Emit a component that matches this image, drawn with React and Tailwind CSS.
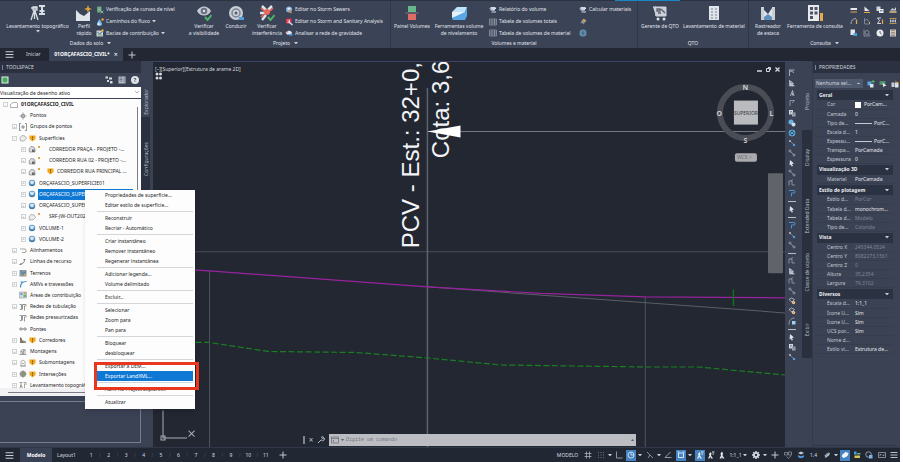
import React from "react";
import clsx from "clsx";

// small 16x16 drawings, used everywhere at 8 - 16px
const glyphs = {
  tripod: (
    <g stroke="#d9dde4" fill="none" strokeWidth="1.3">
      <path d="M1 3h6M3 2h4v3H3zM4 6L1 15M5 6l3 9M4.500 5v9" />
      <path d="M9 1h6M12 1v8M9.500 6h5M9 9h6" strokeWidth="2" />
    </g>
  ),
  profile: (
    <g>
      <path d="M0 5l4 4 4 2 6-5v10H0z" fill="#dfe3ea" />
      <path d="M12 0l1 3 3 1-3 1-1 3-1-3-3-1 3-1z" fill="#e8a33a" />
    </g>
  ),
  contour: (
    <g>
      <path d="M2 1h9v12H2z" fill="#5f9c7c" />
      <path d="M4 4h6M4 7h6M4 10h4" stroke="#b6d8c4" strokeWidth="1" />
      <path d="M9 9l6 6M15 9l-6 6" stroke="#9ac8ae" strokeWidth="1.500" />
    </g>
  ),
  drop: (
    <g>
      <path d="M7 2c3 5 5 7 5 10a5 4 0 0 1-10 0c0-3 2-5 5-10z" fill="#7db9ea" />
      <path d="M5 8l4 6H2z" fill="#dceafa" />
      <circle cx="13" cy="3" r="2.500" fill="#e8a33a" />
    </g>
  ),
  basin: (
    <g>
      <path d="M1 3h13v12H1z" fill="#c7d3d5" />
      <path d="M3 6l4 4 6-5" stroke="#3f6f8e" strokeWidth="2" fill="none" />
      <path d="M4 12h8" stroke="#6fae6b" strokeWidth="2" />
      <circle cx="13" cy="3" r="2.500" fill="#e8a33a" />
    </g>
  ),
  eye: (
    <g>
      <path d="M1 6c3-6 11-6 14 0-3 6-11 6-14 0z" fill="#c6cbd4" />
      <circle cx="8" cy="6" r="3.300" fill="#6a7282" />
      <circle cx="8" cy="6" r="1.200" fill="#dfe3ea" />
      <path d="M9 12l2.500 3 4-5" stroke="#4fb36a" strokeWidth="2" fill="none" />
    </g>
  ),
  drive: (
    <g>
      <circle cx="8" cy="8" r="7" fill="#c9cdd5" />
      <circle cx="8" cy="8" r="4" fill="none" stroke="#7c8493" strokeWidth="1.500" />
      <circle cx="8" cy="8" r="1.500" fill="#59616f" />
      <path d="M11 12h5v3h-5z" fill="#4f9be0" />
    </g>
  ),
  clash: (
    <g>
      <path d="M3 1l4 4M13 1L9 5M1 8h5M3 15l4-5" stroke="#dfe3ea" strokeWidth="2.500" />
      <circle cx="8" cy="7" r="3" fill="#e8695c" />
      <path d="M2 3l3 3M14 3l-3 3M2 12l3-3" stroke="#e8695c" strokeWidth="1.500" />
      <path d="M9 12l2.500 3 4-5" stroke="#4fb36a" strokeWidth="2" fill="none" />
    </g>
  ),
  storm: (
    <g>
      <circle cx="8" cy="7" r="6" fill="#86b4dd" />
      <path d="M4 5l4-2 4 2-4 3z" fill="#e4ebf3" />
      <path d="M8 9l5 5" stroke="#d98b45" strokeWidth="3" />
    </g>
  ),
  sanitary: (
    <g>
      <path d="M2 1h11v10H2z" fill="#d8334c" />
      <path d="M5 4l4 4M9 3v6H5" stroke="#fff" strokeWidth="1.500" fill="none" />
      <path d="M9 9l6 5" stroke="#d7e0ec" strokeWidth="3" />
    </g>
  ),
  gravity: (
    <g>
      <path d="M1 7l7-4 6 3-2 6-8-1z" fill="#dfe5ee" />
      <path d="M6 10h9v3H8z" fill="#5aa0e0" />
      <circle cx="4" cy="6" r="1.500" fill="#e8695c" />
    </g>
  ),
  volume: (
    <g>
      <path d="M4 1h8v6H4z" fill="#69b58c" />
      <path d="M4 9h8v6H4z" fill="#dd6d66" />
      <path d="M1 8h14" stroke="#8a6a70" strokeWidth="1" />
    </g>
  ),
  grading: (
    <g>
      <path d="M1 7l5-5h10l-2 5z" fill="#bfe3fa" />
      <path d="M1 7l13 0v3L1 13z" fill="#e6f1fa" />
      <path d="M1 13l13-6 2-5v9l-2 4H2z" fill="#5aa7e6" />
    </g>
  ),
  report: (
    <g>
      <path d="M3 2h9v7H3zM5 11h9v2H5z" fill="#d3d7de" />
      <path d="M1 4l4 4 5 1" stroke="#8fb3d8" strokeWidth="2" fill="none" />
      <path d="M11 3h3v3h-3z" fill="#e9ecf1" />
    </g>
  ),
  table: (
    <g fill="none" stroke="#a3aab6" strokeWidth="1.200">
      <path d="M1 2h14v12H1zM1 6h14M1 10h14M6 2v12M11 2v12" />
    </g>
  ),
  spark: (
    <g>
      <path d="M9 1l2 4 4 1-4 3-1 4-3-3-4 1 2-5z" fill="#8d95a4" />
      <circle cx="11" cy="5" r="2.500" fill="#e8a33a" />
    </g>
  ),
  globe: (
    <g>
      <circle cx="8" cy="8" r="7" fill="#6f9cba" />
      <path d="M2 8h12M8 2v12M4 4c3 3 5 3 8 0M4 12c3-3 5-3 8 0" stroke="#28506f" fill="none" />
    </g>
  ),
  cart: (
    <g>
      <path d="M1 2h3v9M3 2h11v9H4z" fill="#ccd1d9" stroke="#ccd1d9" />
      <path d="M5 4h3v2H5zM9 4l4 4M6 8h3" stroke="#59616f" strokeWidth="1.300" fill="none" />
      <circle cx="6" cy="14" r="1.500" fill="#dfe3ea" />
      <circle cx="12" cy="14" r="1.500" fill="#dfe3ea" />
    </g>
  ),
  sheet: (
    <g>
      <path d="M3 1h10v14H3z" fill="#dfe3ea" />
      <path d="M5 4h2M9 4h2M5 7h2M9 7h2M5 10h2M9 10h2M5 13h2M9 13h2" stroke="#7c8493" strokeWidth="1.200" />
    </g>
  ),
  stake: (
    <g>
      <path d="M1 2h3v13H1zM12 2h3v13h-3z" fill="#c9ced7" />
      <path d="M4 5l4 4 4-6v12H4z" fill="#dfe3ea" />
      <path d="M4 12l4-3 4 3v3H4z" fill="#5d90bd" />
    </g>
  ),
  inquiry: (
    <g>
      <path d="M1 0h11v16H1z" fill="#e7e9ed" />
      <path d="M3 2h3v3H3zM7.500 2h3v3h-3zM3 6.500h3v3H3zM7.500 6.500h3v3h-3zM3 11h3v3H3z" fill="#4a5263" />
      <path d="M13 8h3v8h-3z" fill="#e3a94c" />
    </g>
  ),
  ruler: (
    <g>
      <path d="M1 4h13v4H1z" fill="#e5e7eb" />
      <path d="M1 12h13" stroke="#e3a94c" strokeWidth="2" />
    </g>
  ),
  slope: (
    <g>
      <path d="M3 1l10 9H3z" fill="#e5e7eb" />
      <path d="M2 13h12" stroke="#e3a94c" strokeWidth="2" />
    </g>
  ),
  copy: (
    <g>
      <path d="M1 1h8v9H1z" fill="#cfd4dc" />
      <path d="M6 6h9v8H6z" fill="#eef0f3" />
      <path d="M8 8h5v3H8z" fill="#7d93b4" />
    </g>
  ),
  arc: (
    <g fill="none">
      <path d="M2 14C2 7 6 3 12 3" stroke="#c5cad3" strokeWidth="1.500" />
      <path d="M13 5v9" stroke="#e3a94c" strokeWidth="2.500" />
    </g>
  ),
  points: (
    <g fill="none" stroke="#9fa6b4">
      <path d="M3 2v12h10M3 8l5-4 5 7" strokeWidth="1.300" />
      <path d="M13 10v4" stroke="#e3a94c" strokeWidth="2" />
    </g>
  ),
  sigma: (
    <g fill="none">
      <path d="M10 2H3l4 5-4 6h7" stroke="#e5e7eb" strokeWidth="1.800" />
      <path d="M13 5v9" stroke="#e3a94c" strokeWidth="2.500" />
    </g>
  ),
  paste: (
    <g>
      <path d="M1 1h9v11H1z" fill="#e5e7eb" />
      <path d="M7 8h7v6H7z" fill="#4f9be0" />
    </g>
  ),
  magnify: (
    <g fill="none" stroke="#a8aeba" strokeWidth="1.300">
      <path d="M2 1v13h12" />
      <circle cx="8" cy="7" r="4" />
      <path d="M11 10l3 3" />
    </g>
  ),
  clock: (
    <g>
      <circle cx="8" cy="8" r="7" fill="#e9ebef" />
      <path d="M8 4v4l3 2" stroke="#3a4254" strokeWidth="1.500" fill="none" />
    </g>
  ),
  calc: (
    <g>
      <path d="M2 1h12v14H2z" fill="#d5c9bb" />
      <path d="M4 3h8M4 7h8M4 10h8M4 13h8" stroke="#555d6c" />
    </g>
  ),
  elevation: (
    <g>
      <path d="M2 9l5-5 3 3 4-5v7z" fill="#c9ced7" />
      <path d="M1 12h14" stroke="#e3c27c" strokeWidth="3" />
    </g>
  ),
  range: (
    <g>
      <path d="M1 3h14M1 13h14" stroke="#e3a94c" strokeWidth="1.500" />
      <path d="M3 5v6M8 5v6M13 5v6M3 8h10" stroke="#e5e7eb" strokeWidth="1.500" />
    </g>
  ),
  refresh: (
    <g>
      <path d="M1 1h14v14H1z" fill="#e8f0ea" />
      <path d="M3 3h10v10H3z" fill="#3fae5d" />
    </g>
  ),
  tree: (
    <g fill="#d5d9e0">
      <path d="M1 1h5v4H1zM8 3h6v4H8zM4 8h4v4H4zM10 10h5v5h-5z" />
    </g>
  ),
  list: (
    <g>
      <path d="M1 1h14v14H1z" fill="#b9bec8" />
      <path d="M3 4h6M3 7h6M3 10h6" stroke="#4a5263" strokeWidth="1.300" />
      <path d="M11 3h3v10h-3z" fill="#8d95a4" />
    </g>
  ),
  // tree
  drawing: <path d="M1 7l5-4h7l2 2v8H1z" fill="#fff" stroke="#777" strokeWidth="1.200" />,
  cross: (
    <path d="M8 1v14M1 8h14M5 5h6v6H5z" stroke="#777" strokeWidth="1.300" fill="none" />
  ),
  bracket: (
    <path d="M4 1H1v14h3M12 1h3v14h-3M8 4v8M4 8h8" stroke="#666" strokeWidth="1.400" fill="none" />
  ),
  surface: (
    <path d="M2 8l4-5 6 1 3 5-5 5H3z" fill="#eee" stroke="#888" strokeWidth="1.200" />
  ),
  corridorSurface: (
    <g>
      <path d="M2 8l4-5 6 1 2 4v6H3z" fill="#ddd" stroke="#777" strokeWidth="1.300" />
      <path d="M8 9h5v5H8z" fill="#666" />
    </g>
  ),
  ball: (
    <g>
      <circle cx="8" cy="8" r="6.500" fill="#5d93c0" />
      <path d="M3 5l5-2 5 2-3 5H6z" fill="#cfe4f4" />
      <path d="M3 11c3 3 7 3 10 0" stroke="#2d587e" fill="none" />
    </g>
  ),
  warn: (
    <g>
      <path d="M1 1h14v8l-7 6-7-6z" fill="#f2a81d" />
      <path d="M8 3v5M8 9.500v2" stroke="#5a3d00" strokeWidth="1.600" />
    </g>
  ),
  align: <path d="M2 4h10c3 0 3 7 0 7H6" stroke="#777" strokeWidth="1.300" fill="none" />,
  feature: (
    <path d="M2 12c6 0 9-3 9-9M9 3h4M1 13h4" stroke="#666" strokeWidth="1.600" fill="none" />
  ),
  parcel: (
    <g>
      <path d="M1 2h14v13H1z" fill="#8a9aa6" />
      <path d="M3 2l5 6 6-4v5l-6 5z" fill="#4d82ad" />
      <path d="M9 9h5v5H9z" fill="#c9a35e" />
    </g>
  ),
  rail: <path d="M3 15C3 7 7 3 15 3M3 4h4" stroke="#3f8ccd" strokeWidth="2.200" fill="none" />,
  area: (
    <g>
      <path d="M1 2h14v12H1z" fill="#cfd9de" stroke="#7b8a94" />
      <path d="M3 4h4v4H3z" fill="#5c9bd0" />
      <path d="M9 7h5v5H9z" fill="#6fae6b" />
      <circle cx="12" cy="4" r="2" fill="#e39a3a" />
    </g>
  ),
  pipe: (
    <path d="M1 3h4v10H2M7 13V3h7v4M11 5v10M5 6h2" stroke="#777" strokeWidth="1.500" fill="none" />
  ),
  bridge: (
    <g fill="none" stroke="#777" strokeWidth="1.300">
      <circle cx="4" cy="8" r="2.500" />
      <circle cx="12" cy="8" r="2.500" />
      <path d="M1 8h14" />
    </g>
  ),
  corridor: (
    <g>
      <path d="M2 14V2l4 3v3l8 3v3z" fill="#7d776a" />
      <path d="M6 8l8 6" stroke="#d6cfbd" />
    </g>
  ),
  assembly: (
    <path d="M1 13h14M4 13V7h3v6M9 13V4h3v9M2 7l5-4 6 1" stroke="#777" strokeWidth="1.300" fill="none" />
  ),
  sub: <path d="M4 14V5l4-3 4 3v9zM6 9h4M2 14h12" stroke="#888" strokeWidth="1.300" fill="none" />,
  inter: <path d="M8 1v14M1 8h14M4 4h8v8H4z" stroke="#6b7560" strokeWidth="2.200" fill="none" />,
  survey: <path d="M1 3h6M4 3v10M2 14l2-6 3 6M9 3h5v5M11 5v9" stroke="#777" strokeWidth="1.300" fill="none" />,
  // canvas toolbar
  p1: <path d="M2 2h11M3 14V3l9 4" stroke="#b8bfcb" strokeWidth="1.700" fill="none" />,
  p2: <path d="M3 2v12h10M5 4l6 5H6z" stroke="#b8bfcb" strokeWidth="1.500" fill="#b8bfcb" />,
  p3: <path d="M5 14l4-11 3 11M9 8v5" stroke="#c6ccd6" strokeWidth="1.600" fill="none" />,
  p4: <path d="M4 14V3h9L8 8" stroke="#9da5b4" strokeWidth="1.600" fill="none" />,
  p5: (
    <g>
      <path d="M2 2h8v9H2z" fill="#d5d9e0" />
      <path d="M8 7h7v8H8z" fill="#9da5b4" />
      <path d="M4 5h4M4 8h3M10 10h3" stroke="#3b4254" />
    </g>
  ),
  p6: (
    <g>
      <circle cx="6" cy="6" r="5" fill="#69b5e8" />
      <circle cx="11" cy="11" r="4" fill="#d4dae3" />
    </g>
  ),
  p7: (
    <g fill="none" stroke="#57b1ea" strokeWidth="2">
      <circle cx="8" cy="8" r="6" />
      <path d="M3 4l10 8M13 4L3 12" />
    </g>
  ),
  p8: (
    <g>
      <circle cx="4" cy="4" r="2" fill="#b8bfcb" />
      <path d="M4 4l7 7" stroke="#b8bfcb" />
      <circle cx="12" cy="12" r="2.500" fill="#4f9be0" />
    </g>
  ),
  p9: (
    <g fill="none" stroke="#aeb5c2" strokeWidth="1.400">
      <circle cx="4" cy="4" r="2" />
      <path d="M6 6l4 4" />
      <circle cx="12" cy="12" r="2" />
    </g>
  ),
  p10: <path d="M4 2l8 7-4 1 2 4-3 1-1-4-3 2z" fill="#dfe3ea" />,
  p11: <path d="M2 13V4h6v8h6M5 4l5-3" stroke="#9da5b4" strokeWidth="1.500" fill="none" />,
  p12: <path d="M2 3h10c3 0 3 5 0 5H7v7" stroke="#4f9be0" strokeWidth="1.800" fill="none" />,
  p13: (
    <g>
      <path d="M2 5l5-3 6 3-5 5z" fill="none" stroke="#cbd0d9" strokeWidth="1.500" />
      <circle cx="11" cy="11" r="3.500" fill="#e3c79a" />
      <path d="M9 13l5-5" stroke="#d06a5a" strokeWidth="1.500" />
    </g>
  ),
  p14: (
    <g>
      <path d="M2 15C2 7 6 2 13 2" stroke="#aeb5c2" strokeWidth="1.500" fill="none" />
      <path d="M8 8h7v7H8z" fill="#9fd0f5" />
    </g>
  ),
  // status bar
  grid: <path d="M1 5h14M1 11h14M5 1v14M11 1v14" stroke="#a9b0bd" strokeWidth="1.600" />,
  dots: (
    <path d="M2 3h12M2 8h12M2 13h12" stroke="#7d8595" strokeWidth="1.600" strokeDasharray="2 3" />
  ),
  ortho: <path d="M3 1v13h12" stroke="#a9b0bd" strokeWidth="1.600" fill="none" />,
  polar: (
    <g fill="none" stroke="#e5f0fb" strokeWidth="1.500">
      <circle cx="8" cy="8" r="6" />
      <path d="M8 3v5h6" />
    </g>
  ),
  iso: <path d="M2 2l12 12M8 8l-4 6" stroke="#a9b0bd" strokeWidth="1.500" fill="none" />,
  angle: <path d="M13 2L2 13h13" stroke="#a9b0bd" strokeWidth="1.700" fill="none" />,
  osnap: <path d="M3 4h10v9H3zM1 2h4M11 2h4" stroke="#e5f0fb" strokeWidth="1.800" fill="none" />,
  person: <path d="M8 1l2 4-1 4 4 6H9L8 11l-1 4H3l3-6-1-4z" fill="#e5e9f0" />,
  personPlus: (
    <g fill="#e5e9f0">
      <path d="M7 2l2 3-1 4 4 6H8l-1-4-2 4H2l3-6-1-3z" />
      <path d="M10 1h5v2h-5zM11 5h3v2h-3z" />
    </g>
  ),
  gear: (
    <g>
      <path d="M8 0v16M0 8h16M2.500 2.500l11 11M13.500 2.500l-11 11" stroke="#d5dae2" strokeWidth="3" />
      <circle cx="8" cy="8" r="5.500" fill="#d5dae2" />
      <circle cx="8" cy="8" r="2.300" fill="#242a36" />
    </g>
  ),
  plus: <path d="M8 1v14M1 8h14" stroke="#c3c9d3" strokeWidth="2" />,
  annot: (
    <g fill="none" stroke="#8d95a4" strokeWidth="1.500">
      <path d="M1 3h6v5H1zM9 2h6v6H9zM5 11l4 4 5-6" />
    </g>
  ),
  layers: (
    <g>
      <path d="M2 4l6-3 6 3-6 3z" fill="#c3c9d3" />
      <path d="M2 8c3 3 9 3 12 0v4c-3 3-9 3-12 0z" fill="#4f9be0" />
    </g>
  ),
  leaf: (
    <g>
      <path d="M3 9l7-6 4 1-2 5-7 5z" fill="#b9c0cc" />
      <path d="M1 14L14 1" stroke="#242a36" />
    </g>
  ),
  pill: <path d="M2 8l7-6 6 2-2 6-7 4-4-2z" fill="#f1f6fc" />,
  colors: (
    <g>
      <path d="M2 1h5v6H2z" fill="#4f9be0" />
      <path d="M8 4h7v3H8z" fill="#5fb37c" />
      <path d="M3 9h11v5H3z" fill="#d7c65a" />
    </g>
  ),
  lock: (
    <g>
      <circle cx="7" cy="7" r="5.500" fill="none" stroke="#b9c0cc" strokeWidth="1.500" />
      <path d="M8 8h7v7H8z" fill="#7fb4e6" />
    </g>
  ),
  full: (
    <path d="M1 3h14v10H1zM4 10V7h3M12 6v3H9" stroke="#aab1be" strokeWidth="1.400" fill="none" />
  ),
  burger: <path d="M1 3h14M1 8h14M1 13h14" stroke="#c9ced8" strokeWidth="1.800" />,
  wrench: <path d="M2 14L9 7M8 3a4 4 0 0 1 5-1l-2 3 1 1 3-1a4 4 0 0 1-6 4" stroke="#b8bfcb" strokeWidth="2" fill="none" />,
  prompt: <path d="M1 2h14v12H1zM1 5h14M4 8l2 2-2 2" stroke="#6b6f77" strokeWidth="1.500" fill="none" />,
  pickAdd: (
    <g>
      <path d="M1 3h8v8H1z" fill="#5aa7e6" />
      <path d="M6 8h7v7H6z" fill="#dfe3ea" />
      <path d="M12 0v7M9 3h7" stroke="#4fb36a" strokeWidth="2" />
    </g>
  ),
  pick: (
    <g>
      <path d="M1 2h12v8H1z" fill="#4f8f6d" />
      <path d="M7 5l8 7-4 0-2 3z" fill="#eef0f3" />
    </g>
  ),
  quick: (
    <g>
      <path d="M1 5h6v9H1z" fill="#c9ced7" />
      <path d="M8 5h7v10H8z" fill="#dfe3ea" />
      <path d="M9 0l2 4h4l-5 4z" fill="#e8a33a" />
    </g>
  ),
};

const Icon = ({ name, className = "size-2" }) => (
  <svg viewBox="0 0 16 16" className={clsx("shrink-0", className)} aria-hidden="true">
    {glyphs[name]}
  </svg>
);

const Caret = ({ className = "fill-[#c9ced8]" }) => (
  <svg viewBox="0 0 8 5" className={clsx("w-1 shrink-0", className)} aria-hidden="true">
    <path d="M0 0h8L4 5z" />
  </svg>
);

//Ribbon
const BigButton = ({ icon, lines, caret, className }) => (
  <button className={clsx("flex flex-col items-center gap-0.5 whitespace-nowrap pt-1", className)}>
    <Icon name={icon} className="size-4" />
    <span className="flex flex-col items-center leading-[7px]">
      {lines.map((line) => (
        <span key={line}>{line}</span>
      ))}
      {caret && <Caret />}
    </span>
  </button>
);

const SmallButtons = ({ items, className }) => (
  <div className={clsx("flex flex-col pt-[3px]", className)}>
    {items.map(([icon, label, caret]) => (
      <button key={icon + label} aria-label={label || icon} className="flex flex-1 items-center gap-[2px] whitespace-nowrap">
        <Icon name={icon} />
        {label}
        {caret && <Caret />}
      </button>
    ))}
  </div>
);

const RibbonGroup = ({ title, caret, className, children }) => (
  <section className={clsx("flex shrink-0 flex-col", className)}>
    <div className="flex h-[38px]">{children}</div>
    <h2 className="flex h-[8px] items-center justify-center gap-1">
      {title}
      {caret && <Caret />}
    </h2>
  </section>
);

const inquiryTools = [
  "ruler", "slope", "copy", "elevation",
  "arc", "points", "sigma", "range",
  "paste", "magnify", "clock", "calc",
];

const Ribbon = () => (
  <header className="flex h-12 shrink-0 overflow-hidden border-t border-[#2b3242] bg-[#3b4357] text-[#e1e4ea]">
    <RibbonGroup title="Dados do solo" caret className="w-[181px]">
      <BigButton icon="tripod" lines={["Levantamento topográfico"]} caret className="w-[75px]" />
      <BigButton icon="profile" lines={["Perfil", "rápido"]} className="w-[18px]" />
      <SmallButtons
        className="pl-[3px]"
        items={[
          ["contour", "Verificação de curvas de nível"],
          ["drop", "Caminhos do fluxo", true],
          ["basin", "Bacias de contribuição", true],
        ]}
      />
    </RibbonGroup>
    <RibbonGroup title="Projeto" caret className="w-[210px] border-r border-[#30374a]">
      <BigButton icon="eye" lines={["Verificar", "a visibilidade"]} className="ml-[6px] w-[34px]" />
      <BigButton icon="drive" lines={["Conduzir"]} className="w-[30px]" />
      <BigButton icon="clash" lines={["Verificar", "interferência"]} className="w-[32px]" />
      <SmallButtons
        className="pl-[2px]"
        items={[
          ["storm", "Editar no Storm Sewers"],
          ["sanitary", "Editar no Storm and Sanitary Analysis"],
          ["gravity", "Analisar a rede de gravidade"],
        ]}
      />
    </RibbonGroup>
    <RibbonGroup title="Volumes e material" className="w-[247px] border-r border-[#30374a]">
      <BigButton icon="volume" lines={["Painel Volumes"]} className="ml-[2px] w-[38px]" />
      <BigButton icon="grading" lines={["Ferramentas volume", "de nivelamento"]} className="w-[56px]" />
      <SmallButtons
        className="w-[92px] pl-[2px]"
        items={[
          ["report", "Relatório do volume"],
          ["table", "Tabela de volumes totais"],
          ["table", "Tabela de volumes de material"],
        ]}
      />
      <SmallButtons items={[["report", "Calcular materiais"], ["spark", ""], ["globe", ""]]} />
    </RibbonGroup>
    <RibbonGroup title="QTO" className="w-[111px] border-r border-[#30374a]">
      <BigButton icon="cart" lines={["Gerente de QTO"]} className="ml-[2px] w-[40px]" />
      <BigButton icon="sheet" lines={["Levantamento de material"]} className="w-[68px]" />
    </RibbonGroup>
    <RibbonGroup title="Consulta" caret className="w-[151px]">
      <BigButton icon="stake" lines={["Rastreador", "de estaca"]} className="ml-[4px] w-[30px]" />
      <BigButton icon="inquiry" lines={["Ferramenta de consulta"]} className="w-[64px]" />
      <div className="grid w-[52px] grid-cols-4 place-items-center pt-[3px]">
        {inquiryTools.map((name) => (
          <button key={name} aria-label={name}>
            <Icon name={name} />
          </button>
        ))}
      </div>
    </RibbonGroup>
  </header>
);

const FileTabs = () => (
  <nav className="flex h-[13px] shrink-0 items-center bg-[#222733] text-[#d3d7de]">
    <button aria-label="Menu" className="ml-[5px]">
      <Icon name="burger" className="size-[9px]" />
    </button>
    <button className="ml-[12px] w-[23px] text-left">Iniciar</button>
    <button className="flex h-full w-[74px] items-center justify-center gap-1 bg-[#3b4357] font-bold text-white">
      01ORÇAFASCIO_CIVIL* <span className="text-[7px] font-normal">×</span>
    </button>
    <button aria-label="Nova guia" className="ml-[5px]">
      <Icon name="plus" />
    </button>
  </nav>
);

//Toolspace
const treeRows = [
  [0, "-", "drawing", "01ORÇAFASCIO_CIVIL"],
  [1, "", "cross", "Pontos"],
  [1, "+", "bracket", "Grupos de pontos"],
  [1, "-", "surface", "Superfícies", "warn"],
  [2, "+", "corridorSurface", "CORREDOR PRAÇA - PROJETO -...", "dot"],
  [2, "+", "corridorSurface", "CORREDOR RUA 02 - PROJETO -...", "dot"],
  [2, "+", "corridorSurface", "CORREDOR RUA PRINCIPAL ...", "dotwarn"],
  [2, "+", "ball", "ORÇAFASCIO_SUPERFICIE01"],
  [2, "+", "ball", "ORÇAFASCIO_SUPERFICIE02", "selected"],
  [2, "+", "ball", "ORÇAFASCIO_SUPERFICIE03"],
  [2, "+", "surface", "SRF-JW-OUT2023", "dot"],
  [2, "+", "ball", "VOLUME-1"],
  [2, "+", "ball", "VOLUME-2"],
  [1, "+", "align", "Alinhamentos"],
  [1, "+", "feature", "Linhas de recurso"],
  [1, "+", "parcel", "Terrenos"],
  [1, "+", "rail", "AMVs e travessões"],
  [1, "", "area", "Áreas de contribuição"],
  [1, "+", "pipe", "Redes de tubulação"],
  [1, "", "pipe", "Redes pressurizadas"],
  [1, "", "bridge", "Pontes"],
  [1, "+", "corridor", "Corredores", "warn"],
  [1, "+", "assembly", "Montagens"],
  [1, "+", "sub", "Submontagens", "warn"],
  [1, "+", "inter", "Interseções", "warn"],
  [1, "+", "survey", "Levantamento topográfico"],
];

const indent = ["pl-[3px]", "pl-[12px]", "pl-[21px]"];

const TreeRow = ({ row: [level, toggle, icon, label, mark] }) => (
  <li className={clsx("flex items-center whitespace-nowrap", indent[level])}>
    <span className="flex w-[7px] justify-start">
      {toggle && (
        <span className="flex size-[5px] items-center justify-center border border-[#cfd1d5] text-[4px] leading-none text-[#777]">
          {toggle}
        </span>
      )}
    </span>
    <Icon name={icon} className="size-[8px]" />
    {mark === "warn" && <Icon name="warn" className="ml-[2px] size-[7px]" />}
    {mark && mark.startsWith("dot") && <span className="mb-[5px] ml-[2px] size-[2px] bg-[#e8a33a]" />}
    {mark === "dotwarn" && <Icon name="warn" className="ml-[7px] size-[7px]" />}
    <button
      className={clsx(
        "ml-[2px] pl-px text-left leading-[11px]",
        level === 0 && "font-bold",
        mark === "dot" && "ml-[8px]",
        mark === "selected" ? "flex-1 bg-[#0f78d4] text-white" : "text-[#1f1f1f]"
      )}
    >
      {label}
    </button>
  </li>
);

const SideTab = ({ active, className, children }) => (
  <button
    className={clsx(
      "flex w-full items-center justify-center text-[#b4bbc7]",
      active ? "bg-[#3b4254]" : "bg-[#2a303e]",
      className
    )}
  >
    <span className="rotate-180 whitespace-nowrap leading-[8px] [writing-mode:vertical-rl]">{children}</span>
  </button>
);

const PanelTitle = ({ children }) => (
  <h2 className="flex h-3 items-center gap-[3px] bg-[#2b3140] pl-[2px] text-[#d3d7de]">
    <span className="h-[5px] w-px bg-[#7d8595]" />
    {children}
  </h2>
);

const Toolspace = () => (
  <aside className="flex w-[153px] shrink-0 bg-[#3b4254]">
    <div className="flex w-[141px] flex-col overflow-hidden">
      <PanelTitle>TOOLSPACE</PanelTitle>
      <div className="flex h-[14px] items-center pl-px pr-[2px]">
        <button aria-label="Atualizar">
          <Icon name="refresh" />
        </button>
        <div className="ml-auto flex gap-[5px]">
          <button aria-label="Árvore"><Icon name="tree" /></button>
          <button aria-label="Panorama"><Icon name="list" /></button>
          <button aria-label="Ajuda" className="size-2 rounded-full bg-[#dfe2e8] font-bold leading-[8px] text-[#3b4254]">?</button>
        </div>
      </div>
      <label className="flex h-[11px] items-center bg-white pr-[2px]">
        <select aria-label="Visualização" className="h-[10px] min-w-0 flex-1 appearance-none leading-[10px] text-[#1f1f1f]">
          <option>Visualização de desenho ativo</option>
        </select>
        <svg viewBox="0 0 8 5" className="w-1 fill-none stroke-[#666]"><path d="M0 0l4 4 4-4" /></svg>
      </label>
      <div className="mt-px flex h-[289px] shrink-0 overflow-hidden bg-[#fcfcfd]">
        <ul className="flex h-[292px] min-w-0 flex-1 flex-col justify-between overflow-hidden">
          {treeRows.map((row) => (
            <TreeRow key={row[3]} row={row} />
          ))}
        </ul>
        <div className="w-[8px] shrink-0 pt-[8px]">
          <div className="mx-auto h-[130px] w-px bg-[#7d7f83]" />
        </div>
      </div>
      <div className="flex h-2 shrink-0 items-center bg-[#f1f1f3] px-2">
        <div className="h-px w-[90px] bg-[#7d7f83]" />
      </div>
      <div className="mb-1 mt-[5px] flex-1 border border-l-0 border-[#767d8c]" />
    </div>
    <div className="w-[9px] pt-[26px]">
      <SideTab active className="h-[30px]">Explorador</SideTab>
      <SideTab className="h-[84px]">Configurações</SideTab>
    </div>
  </aside>
);

//Context menu
const menuGroups = [
  ["Propriedades de superfície...", "Editar estilo de superfície..."],
  ["Reconstruir", "Recriar - Automático"],
  ["Criar instantâneo", "Remover instantâneo", "Regenerar instantânea"],
  ["Adicionar legenda...", "Volume delimitado"],
  ["Excluir..."],
  ["Selecionar", "Zoom para", "Pan para"],
  ["Bloquear", "desbloquear"],
  ["Exportar a DEM...", "Exportar LandXML..."],
  ["Abrir no Project Explorer..."],
  ["Atualizar"],
];

const ContextMenu = () => (
  <div className="absolute left-[85px] top-[190px] w-[110px] bg-[#fdfdfd] pb-[2px] text-[#1f1f1f] shadow-md" role="menu">
    <div className="ml-3 mr-[2px]">
      {menuGroups.map((group, i) => (
        <div key={i} className={clsx("flex flex-col", i > 0 && "mt-px border-t border-[#d3d5d9] pt-px")}>
          {group.map((item) => (
            <button
              key={item}
              role="menuitem"
              className={clsx(
                "h-[10px] whitespace-nowrap pl-2 text-left leading-[10px]",
                item === "Exportar LandXML..." && "bg-[#0f78d4] text-white"
              )}
            >
              {item}
            </button>
          ))}
        </div>
      ))}
    </div>
  </div>
);

//Drawing area
const Profile = () => (
  <svg viewBox="153 62 631 385" preserveAspectRatio="xMinYMin slice" className="absolute inset-0 size-full" fill="none">
    <path d="M153 251.500H784" stroke="#4a4f59" />
    <path d="M427 131.500H784" stroke="#747882" />
    <path d="M427 88V447" stroke="#5f636d" strokeWidth="1.500" />
    <path d="M209.500 270V447M644.500 297V447" stroke="#50545e" />
    <path d="M427 286.500L784 312.500" stroke="#5a5e66" />
    <path d="M153 267L209 270.500L427 286.500L540 293L645 296.500L784 297.500" stroke="#9a229e" strokeWidth="1.200" />
    <path
      d="M153 342H209L268 351L355 352L427 357.500L500 364.500L645 366.500H697L784 374.500"
      stroke="#1a7f22"
      strokeWidth="1.200"
      strokeDasharray="6 2.500"
    />
    <path d="M732.500 289V305.500" stroke="#14701c" strokeWidth="1.500" />
    <g className="fill-[#f3f4f7] font-['Liberation_Sans',sans-serif] text-[24px]">
      <text transform="translate(419 248) rotate(-90)">PCV - Est.: 32+0,</text>
      <text transform="translate(449 158) rotate(-90)">Cota: 3,6</text>
    </g>
    <path d="M427 131.500L460 125.500V137.500z" fill="#fff" />

    {/* ucs */}
    <path d="M163 410V437.500H187M161 435.500h4v4h-4zM188.500 430l6 6M194.500 430l-6 6" stroke="#a9adb5" />
    <g fill="#d5d8de">
      <circle cx="157" cy="74" r="1.500" />
      <circle cx="160.500" cy="74" r="1.500" />
      <circle cx="157" cy="78" r="1.500" />
      <circle cx="160.500" cy="78" r="1.500" />
    </g>

    {/* view cube */}
    <circle cx="744.500" cy="112.500" r="25.500" stroke="#4a4d55" strokeWidth="6" />
    <path d="M733 100.500h24v24h-24z" fill="#b9bbbf" />
    <g className="fill-[#c9ccd2] font-bold" fontSize="7" textAnchor="middle">
      <text x="744.500" y="90">N</text>
      <text x="744.500" y="142.500">S</text>
      <text x="718.500" y="115.500">O</text>
      <text x="770.500" y="115.500">L</text>
    </g>
    <text x="745" y="114.500" fontSize="5" textAnchor="middle" className="fill-[#33363d]">SUPERIOR</text>
    <rect x="734" y="153" width="22" height="8.500" rx="2" fill="#a9abaf" />
    <text x="736" y="159" fontSize="5" className="fill-[#6d7077]">WCS ▿</text>
    <rect x="767" y="173" width="15" height="100" rx="1" fill="#606369" />
  </svg>
);

const Canvas = () => (
  <main className="relative flex min-w-0 flex-1 flex-col overflow-hidden border-t border-[#3c4663] bg-[#222731]">
    <Profile />
    <div className="relative flex items-center justify-between pl-[2px] pr-[5px] pt-[4px] text-[#d5d8de]">
      <span>[–][Superior][Estrutura de arame 2D]</span>
      <div className="flex gap-[4px]">
        <button aria-label="Minimizar">
          <svg viewBox="0 0 5 5" className="size-[5px]"><path d="M0 4h5" stroke="#d5d8de" strokeWidth="1.500" /></svg>
        </button>
        <button aria-label="Restaurar">
          <svg viewBox="0 0 5 5" className="size-[5px]" fill="none" stroke="#d5d8de"><path d="M.5 1.500h3v3h-3zM2 .5h2.500V3" /></svg>
        </button>
        <button aria-label="Fechar">
          <svg viewBox="0 0 5 5" className="size-[5px]"><path d="M.5.5l4 4M4.500.5l-4 4" stroke="#d5d8de" strokeWidth="1.300" /></svg>
        </button>
      </div>
    </div>
    <form className="relative mb-px ml-[150px] mr-[149px] mt-auto flex h-3 items-center">
      <span className="h-2 w-[2px] bg-[#7d8595]" />
      <button type="button" aria-label="Fechar linha" className="w-[12px] text-[8px] leading-[8px] text-[#b8bfcb]">×</button>
      <button type="button" aria-label="Personalizar">
        <Icon name="wrench" />
      </button>
      <label className="ml-1 flex h-full flex-1 items-center gap-[2px] bg-[#bbbdc2] px-[2px]">
        <Icon name="prompt" />
        <Caret className="w-[3px] fill-[#55585e]" />
        <input
          aria-label="Comando"
          placeholder="Digite um comando"
          className="min-w-0 flex-1 font-['Liberation_Mono',monospace] italic leading-[10px] outline-none placeholder:text-[#74777e]"
        />
        <Caret className="w-[3px] rotate-180 fill-[#55585e]" />
      </label>
    </form>
  </main>
);

const toolbar = [
  ["p1", "p2", "p3", "p4", "p5", "p6", "p7", "p8", "p9", "p10", "p9", "p11", "p12"],
  ["p10"],
  ["p12", "p8", "p9"],
  ["p11", "p2", "p11", "p9", "p13", "p13", "p14"],
  ["p10", "p5", "p8"],
];

const Toolbar = () => (
  <div className="flex w-[17px] shrink-0 flex-col items-center gap-1 border-t border-[#3c4663] bg-[#3b4254] pr-[3px] pt-[7px]">
    {toolbar.map((group, i) => (
      <div key={i} className={clsx("flex flex-col items-center gap-[2px]", i > 0 && "border-t border-[#b8bfcb] pt-[3px]")}>
        {group.map((name, j) => (
          <button key={j} aria-label={`Ferramenta ${i + 1}.${j + 1}`}>
            <Icon name={name} />
          </button>
        ))}
      </div>
    ))}
  </div>
);

//Properties
const propGroups = [
  {
    title: "Geral",
    rows: [
      ["Cor", "PorCam...", "swatch"],
      ["Camada", "0"],
      ["Tipo de...", "PorC...", "line"],
      ["Escala d...", "1"],
      ["Espessu...", "PorC...", "line"],
      ["Transpa...", "PorCamada"],
      ["Espessura", "0"],
    ],
  },
  { title: "Visualização 3D", rows: [["Material", "PorCamada"]] },
  {
    title: "Estilo de plotagem",
    rows: [
      ["Estilo d...", "PorCor", "off"],
      ["Tabela d...", "monochrom..."],
      ["Tabela d...", "Modelo", "off"],
      ["Tipo de...", "Colorida", "off"],
    ],
  },
  {
    title: "Vista",
    rows: [
      ["Centro X", "245344,0524", "off"],
      ["Centro Y", "8982273,1561", "off"],
      ["Centro Z", "0", "off"],
      ["Altura", "35,2354", "off"],
      ["Largura", "79,3102", "off"],
    ],
  },
  {
    title: "Diversos",
    rows: [
      ["Escala d...", "1:1_1"],
      ["Ícone U...", "Sim"],
      ["Ícone U...", "Sim"],
      ["UCS por...", "Sim"],
      ["Nome d...", ""],
      ["Estilo vi...", "Estrutura de..."],
    ],
  },
];

const Properties = () => (
  <aside className="flex w-[98px] shrink-0 bg-[#3b4254]">
    <div className="w-[10px] shrink-0">
      <SideTab active className="h-[69px] pt-3">Projeto</SideTab>
      <SideTab className="h-[56px]">Display</SideTab>
      <SideTab className="h-[60px]">Extended Data</SideTab>
      <SideTab className="h-[52px]">Classe de objeto</SideTab>
      <SideTab className="h-[60px] pt-1">Exibir</SideTab>
    </div>
    <div className="flex min-w-0 flex-1 flex-col border-l border-[#333a4b]">
      <PanelTitle>PROPRIEDADES</PanelTitle>
      <div className="mb-[2px] mt-[6px] flex h-[9px] items-center gap-[4px] pl-[2px]">
        <label className="flex h-full w-[48px] items-center bg-[#505a6e] px-px pr-[3px]">
          <select aria-label="Seleção" className="h-[9px] min-w-0 flex-1 appearance-none leading-[9px] text-[#d3d7de]">
            <option>Nenhuma sel...</option>
          </select>
          <Caret className="w-[3px] fill-[#d3d7de]" />
        </label>
        <button aria-label="Adicionar"><Icon name="pickAdd" /></button>
        <button aria-label="Selecionar"><Icon name="pick" /></button>
        <button aria-label="Seleção rápida"><Icon name="quick" /></button>
      </div>
      <div className="flex flex-col gap-px pl-1 pr-[7px]">
        {propGroups.map((group) => (
          <section key={group.title}>
            <h3 className="flex h-[10px] items-center justify-between bg-[#2b3242] pl-[2px] pr-[4px] font-bold text-[#eceef2]">
              {group.title}
              <Caret />
            </h3>
            <table className="w-full table-fixed border-collapse whitespace-nowrap text-[#c5cad4]">
              <tbody>
                {group.rows.map(([label, value, kind], i) => (
                  <tr key={i} className="h-[9px] leading-[8px]">
                    <th className="w-[38px] overflow-hidden border-b border-[#363d4e] p-0 pl-[10px] text-left font-normal">{label}</th>
                    <td className={clsx("overflow-hidden border-b border-[#363d4e] p-0", kind === "off" ? "text-[#7f8797]" : "text-[#e6e8ed]")}>
                      {kind === "swatch" && <span className="mr-[3px] inline-block size-[6px] bg-white align-middle" />}
                      {kind === "line" && <span className="mr-[2px] inline-block h-px w-[17px] bg-[#c5cad4] align-middle" />}
                      {value}
                    </td>
                  </tr>
                ))}
              </tbody>
            </table>
          </section>
        ))}
      </div>
      <div className="mb-px mr-[3px] mt-auto h-px bg-[#2f3646]" />
    </div>
  </aside>
);

//Status bar
const layouts = ["1", "2", "3", "4", "5", "6", "7", "8", "9", "10", "11"];

// icon, width, has drop-down, switched on
const statusTools = [
  ["grid", "w-[13px]"],
  ["dots", "w-[19px]", true],
  ["ortho", "w-[11px]"],
  ["polar", "w-[20px]", true, true],
  ["iso", "w-[18px]", true],
  ["angle", "w-[12px]"],
  ["osnap", "w-[20px]", true, true],
  ["personPlus", "w-[11px]", false, true],
  ["personPlus", "w-[11px]"],
  ["person", "w-[11px]"],
];

const statusToolsRight = [
  ["gear", "w-[20px]", true],
  ["plus", "w-[12px]"],
  ["annot", "w-[14px]"],
  ["layers", "w-[12px]"],
  ["text", "w-[13px]"],
  ["leaf", "w-[19px]", true],
  ["pill", "w-[12px]", false, true],
  ["colors", "w-[11px]"],
  ["lock", "w-[13px]"],
  ["full", "w-[13px]"],
  ["burger", "w-[12px]"],
];

const StatusTool = ({ tool: [icon, width, caret, on] }) => (
  <button aria-label={icon} className={clsx("flex h-[13px] shrink-0 items-center justify-center gap-[2px]", width)}>
    {icon === "text" ? (
      "1.4"
    ) : (
      <span className={clsx("flex h-[11px] w-[10px] items-center justify-center", on && "bg-[#4482c0]")}>
        <Icon name={icon} />
      </span>
    )}
    {caret && <Caret />}
  </button>
);

const StatusBar = () => (
  <footer className="flex h-[15px] shrink-0 items-center border-t border-[#2f3849] bg-[#222833] text-[#d8dce3]">
    <button aria-label="Menu" className="ml-[5px]">
      <Icon name="burger" className="size-[9px]" />
    </button>
    <button className="ml-[6px] h-full w-[32px] bg-[#394154] font-bold text-white">Modelo</button>
    <button className="w-[29px]">Layout1</button>
    <div className="flex w-[192px]">
      {layouts.map((name) => (
        <button key={name} className="flex flex-1">
          <span className="w-[3px] text-[#4d5464]" aria-hidden="true">{name !== "1" && "/"}</span>
          <span className="flex-1">{name}</span>
        </button>
      ))}
    </div>
    <button aria-label="Novo layout" className="ml-[6px]">
      <Icon name="plus" />
    </button>
    <div className="ml-auto flex items-center">
      <button className="w-[27px]">MODELO</button>
      {statusTools.map((tool, i) => (
        <StatusTool key={i} tool={tool} />
      ))}
      <button className="flex w-[22px] items-center justify-center gap-px">
        1:1_1 <Caret />
      </button>
      {statusToolsRight.map((tool) => (
        <StatusTool key={tool[0]} tool={tool} />
      ))}
    </div>
  </footer>
);

const App = () => (
  <div className="bg-white pr-[3px] font-['Noto_Sans',sans-serif] text-[5px] leading-[7px]">
    <div className="relative flex min-h-screen flex-col overflow-hidden">
      <Ribbon />
      <div className="absolute left-[615px] top-0 h-px w-[65px] bg-[#1b86c4]" />
      <FileTabs />
      <div className="flex flex-1">
        <Toolspace />
        <Canvas />
        <Toolbar />
        <Properties />
      </div>
      <StatusBar />
      <ContextMenu />
      <div className="pointer-events-none absolute left-[94px] top-[362px] h-[28px] w-[105px] border-[3px] border-[#e8361f]" />
    </div>
  </div>
);

export default App;
